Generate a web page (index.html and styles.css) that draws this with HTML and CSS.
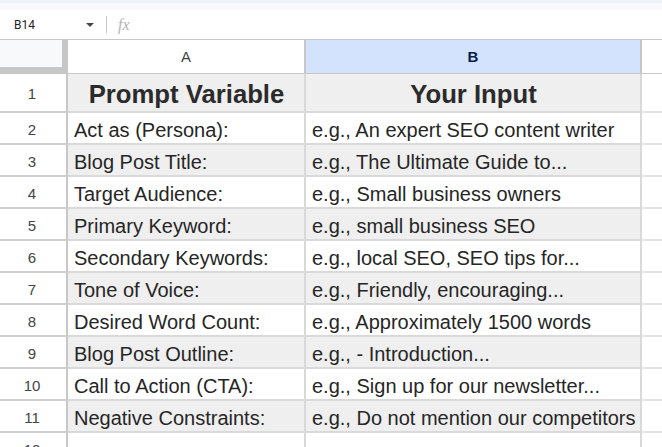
FILE: index.html
```html
<!DOCTYPE html>
<html lang="en">
<head>
  <meta charset="UTF-8">
  <meta name="viewport" content="width=device-width, initial-scale=1.0">
  <title>Blog Post Prompt - Sheet</title>
  <link rel="stylesheet" href="styles.css">
</head>
<body>
  <div class="topstrip"></div>

  <div class="formula-bar">
    <div class="name-box">
      <span class="cell-ref">B14</span>
      <svg class="caret" width="8" height="4" viewBox="0 0 8 4"><path d="M0 0h8L4 4z" fill="#444"/></svg>
    </div>
    <div class="divider"></div>
    <span class="fx">fx</span>
  </div>

  <div class="sheet">
    <!-- column headers -->
    <div class="corner"></div>
    <div class="col-head">A</div>
    <div class="col-head selected">B</div>
    <div class="col-head last"></div>

    <!-- row 1 -->
    <div class="row-num tall">1</div>
    <div class="cell title shade">Prompt Variable</div>
    <div class="cell title shade">Your Input</div>
    <div class="cell extra"></div>

    <div class="row-num">2</div>
    <div class="cell">Act as (Persona):</div>
    <div class="cell">e.g., An expert SEO content writer</div>
    <div class="cell extra"></div>

    <div class="row-num">3</div>
    <div class="cell shade">Blog Post Title:</div>
    <div class="cell shade">e.g., The Ultimate Guide to...</div>
    <div class="cell extra"></div>

    <div class="row-num">4</div>
    <div class="cell">Target Audience:</div>
    <div class="cell">e.g., Small business owners</div>
    <div class="cell extra"></div>

    <div class="row-num">5</div>
    <div class="cell shade">Primary Keyword:</div>
    <div class="cell shade">e.g., small business SEO</div>
    <div class="cell extra"></div>

    <div class="row-num">6</div>
    <div class="cell">Secondary Keywords:</div>
    <div class="cell">e.g., local SEO, SEO tips for...</div>
    <div class="cell extra"></div>

    <div class="row-num">7</div>
    <div class="cell shade">Tone of Voice:</div>
    <div class="cell shade">e.g., Friendly, encouraging...</div>
    <div class="cell extra"></div>

    <div class="row-num">8</div>
    <div class="cell">Desired Word Count:</div>
    <div class="cell">e.g., Approximately 1500 words</div>
    <div class="cell extra"></div>

    <div class="row-num">9</div>
    <div class="cell shade">Blog Post Outline:</div>
    <div class="cell shade">e.g., - Introduction...</div>
    <div class="cell extra"></div>

    <div class="row-num">10</div>
    <div class="cell">Call to Action (CTA):</div>
    <div class="cell">e.g., Sign up for our newsletter...</div>
    <div class="cell extra"></div>

    <div class="row-num">11</div>
    <div class="cell shade">Negative Constraints:</div>
    <div class="cell shade">e.g., Do not mention our competitors</div>
    <div class="cell extra"></div>

    <div class="row-num">12</div>
    <div class="cell"></div>
    <div class="cell"></div>
    <div class="cell extra"></div>
  </div>
</body>
</html>
```

FILE: styles.css
```css
* {
  box-sizing: border-box;
}
body {
  margin: 0;
  font-family: "Liberation Sans", Arial, sans-serif;
  background: #fff;
  overflow: hidden;
}
.topstrip {
  height: 10px;
  background: #f7f9fc;
  border-top: 3px solid #eef2f7;
}
.formula-bar {
  height: 30px;
  display: flex;
  align-items: center;
  border-bottom: 1px solid #c7c7c7;
}
.name-box {
  width: 100px;
  display: flex;
  align-items: center;
  padding-left: 14px;
}
.cell-ref {
  font-family: Roboto, "Liberation Sans", sans-serif;
  font-size: 12px;
  color: #1f1f1f;
  width: 72px;
}
.caret {
  margin-top: 1px;
}
.divider {
  width: 1px;
  height: 17px;
  background: #c4c7c5;
  margin-left: 6px;
}
.fx {
  font-family: "Liberation Serif", serif;
  font-style: italic;
  font-size: 16px;
  color: #b5b5b5;
  margin-left: 11px;
  margin-top: 1px;
}
.sheet {
  display: grid;
  grid-template-columns: 68px 238px 336px 1fr;
  grid-template-rows: 34px 39px repeat(11, 32px);
}
.sheet > div {
  overflow: hidden;
  white-space: nowrap;
}
.corner {
  background: #f8f9fa;
  border-right: 6px solid #c7c7c7;
  border-bottom: 7px solid #c7c7c7;
}
.col-head {
  text-align: center;
  font-size: 15px;
  line-height: 33px;
  color: #444;
  border-right: 2px solid #c7c7c7;
  border-bottom: 1px solid #c7c7c7;
}
.col-head.selected {
  background: #d3e3fd;
  color: #041e49;
  font-weight: bold;
}
.col-head.last {
  border-right: none;
}
.row-num {
  text-align: center;
  font-size: 15px;
  line-height: 30px;
  padding-top: 2px;
  padding-right: 2px;
  color: #444;
  border-right: 2px solid #c7c7c7;
  border-bottom: 2px solid #cfcfcf;
}
.row-num.tall {
  line-height: 35px;
}
.cell {
  display: flex;
  align-items: flex-end;
  padding: 0 5px 1px 6px;
  font-size: 20px;
  line-height: 24px;
  color: #262626;
  border-right: 2px solid #d9d9d9;
  border-bottom: 2px solid #d9d9d9;
}
.cell.shade {
  background: #efefef;
}
.cell.title {
  justify-content: center;
  font-size: 25.7px;
  font-weight: bold;
  line-height: 30px;
  padding-bottom: 2px;
  color: #2b2b2b;
}
.cell.extra {
  border-right: none;
  border-bottom-color: #e2e2e2;
}
```
